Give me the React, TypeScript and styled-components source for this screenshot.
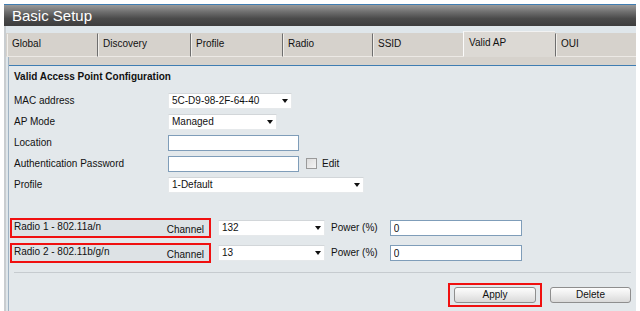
import React from "react";
import styled, { createGlobalStyle } from "styled-components";

const GlobalStyle = createGlobalStyle`
  html, body { margin: 0; padding: 0; background: #fff; overflow: hidden; }
  body {
    font-family: "Liberation Sans", Arial, sans-serif;
    font-size: 10px;
    color: #111;
  }
  * { box-sizing: border-box; }
`;

const Page = styled.div`
  margin-left: 4px;
  width: 632px;
  padding-top: 4px;
`;

const TitleBar = styled.div`
  border-top: 1px solid #3f7db2;
  height: 22px;
  padding-left: 8px;
  background: linear-gradient(to bottom, #9a9a9a 0%, #6c6c6c 35%, #4a4a4a 65%, #3d3d3d 100%);
  color: #fff;
  font-size: 15px;
  line-height: 21px;
`;

const Frame = styled.div`
  background: #dfe6ea;
  border-left: 2px solid #c9cdd0;
  height: 290px;
`;

const TabStrip = styled.div`
  display: flex;
  align-items: flex-end;
  height: 31px;
  padding-top: 5px;
`;

const Tab = styled.div<{ $active?: boolean; $first?: boolean; $w?: number }>`
  flex: ${(p) => (p.$w ? `0 0 ${p.$w}px` : "1 1 auto")};
  height: ${(p) => (p.$active ? 26 : 24)}px;
  display: flex;
  align-items: center;
  padding: 0 0 ${(p) => (p.$active ? 4 : 3)}px 5px;
  background: ${(p) => (p.$active ? "#dcd9d4" : "#d6d2cc")};
  border-left: 1px solid ${(p) => (p.$active ? "#fbfbfb" : p.$first ? "#d6d2cc" : "#6e6e6e")};
  border-top: 1px solid ${(p) => (p.$active ? "#f2f2f2" : "#d6d2cc")};
  border-bottom: 1px solid ${(p) => (p.$active ? "#dcd9d4" : "#ece9e5")};
  box-shadow: ${(p) => (p.$active ? "none" : "inset 1px 0 #f1efeb")};
  color: #111;
  white-space: nowrap;
  overflow: hidden;
`;

const Panel = styled.div`
  margin-left: 2px;
  background: #e3e8eb;
  border-left: 1px solid #9fb3c4;
  height: 260px;
`;

const PanelCap = styled.div`
  height: 9px;
  background: #d6d2cc;
  border-bottom: 1px solid #3f7db2;
`;

const PanelBody = styled.div`
  padding: 0 5px 0 1px;
`;

const Heading = styled.div`
  margin-top: 5px;
  padding-left: 4px;
  font-weight: bold;
  line-height: 12px;
`;

const FormGrid = styled.div`
  margin-top: 7px;
  padding-left: 4px;
  display: grid;
  grid-template-columns: 154px auto;
  grid-auto-rows: 21px;
  align-items: center;
`;

const Label = styled.div`
  line-height: 12px;
`;

const Inline = styled.div`
  display: flex;
  align-items: center;
`;

const SelectWrap = styled.div<{ $w: number }>`
  position: relative;
  width: ${(p) => p.$w}px;
  height: 16px;
  background: #fff;
  border: 1px solid #e6e9eb;
  border-top-color: #d2d6d9;
  &::after {
    content: "";
    position: absolute;
    right: 3px;
    top: 5px;
    border-left: 3.5px solid transparent;
    border-right: 3.5px solid transparent;
    border-top: 4px solid #111;
    pointer-events: none;
  }
`;

const NativeSelect = styled.select`
  appearance: none;
  -webkit-appearance: none;
  border: none;
  outline: none;
  background: transparent;
  width: 100%;
  height: 14px;
  padding: 0 0 0 3px;
  margin: 0;
  font-family: "Liberation Sans", Arial, sans-serif;
  font-size: 10px;
  line-height: 14px;
  color: #111;
`;

const TextBox = styled.input<{ $w: number }>`
  width: ${(p) => p.$w}px;
  height: 16px;
  margin: 0;
  padding: 0 3px;
  border: 1px solid #7f9db9;
  background: #fff;
  font-family: "Liberation Sans", Arial, sans-serif;
  font-size: 10px;
  color: #111;
  outline: none;
`;

const CheckBox = styled.span`
  display: inline-block;
  width: 11px;
  height: 11px;
  margin-left: 7px;
  border: 1px solid #9a9a9a;
  background: linear-gradient(135deg, #dcdcdc, #f4f4f4);
`;

const SmallText = styled.span`
  margin-left: 5px;
  font-size: 10px;
`;

const RadioList = styled.div`
  margin-top: 23px;
  display: flex;
  flex-direction: column;
  gap: 5px;
`;

const RadioRow = styled.div`
  display: flex;
  align-items: center;
  height: 20px;
`;

const RadioBox = styled.div`
  width: 201px;
  height: 20px;
  display: flex;
  justify-content: space-between;
  align-items: center;
  padding: 0 5px 0 2px;
  border: 2px solid #f01010;
  background: #dde2e5;
  margin-right: 7px;
`;

const RadioName = styled.span`
  line-height: 12px;
  padding-bottom: 2px;
`;

const ChannelLabel = styled.span`
  line-height: 12px;
  padding-top: 3px;
`;

const PowerLabel = styled.span`
  margin: 0 12px 0 6px;
  line-height: 12px;
`;

const Separator = styled.div`
  margin: 9px 0 0 4px;
  height: 1px;
  background: #c6cbcf;
`;

const ButtonRow = styled.div`
  margin-top: 10px;
  display: flex;
  justify-content: flex-end;
  align-items: center;
  gap: 8px;
`;

const Highlight = styled.div`
  border: 2px solid #f01010;
  padding: 2px 4px;
`;

const Button = styled.button<{ $w: number }>`
  width: ${(p) => p.$w}px;
  height: 16px;
  margin: 0;
  padding: 0;
  border: 1px solid #8e8e8e;
  border-radius: 3px;
  background: linear-gradient(to bottom, #fdfdfd 0%, #ececec 50%, #d9d9d9 100%);
  font-family: "Liberation Sans", Arial, sans-serif;
  font-size: 10px;
  color: #111;
  line-height: 14px;
`;

const tabs = [
  { name: "Global", w: 91 },
  { name: "Discovery", w: 93 },
  { name: "Profile", w: 92 },
  { name: "Radio", w: 90 },
  { name: "SSID", w: 91 },
  { name: "Valid AP", w: 92 },
  { name: "OUI", w: 0 },
];

const Select = ({ w, value }: { w: number; value: string }) => (
  <SelectWrap $w={w}>
    <NativeSelect defaultValue={value}>
      <option value={value}>{value}</option>
    </NativeSelect>
  </SelectWrap>
);

const radios = [
  { name: "Radio 1 - 802.11a/n", channel: "132", power: "0" },
  { name: "Radio 2 - 802.11b/g/n", channel: "13", power: "0" },
];

export default function App() {
  return (
    <>
      <GlobalStyle />
      <Page>
        <TitleBar>Basic Setup</TitleBar>
        <Frame>
          <TabStrip>
            {tabs.map((t, i) => (
              <Tab key={t.name} $w={t.w || undefined} $first={i === 0} $active={t.name === "Valid AP"}>
                {t.name}
              </Tab>
            ))}
          </TabStrip>
          <Panel>
            <PanelCap />
            <PanelBody>
              <Heading>Valid Access Point Configuration</Heading>
              <FormGrid>
                <Label>MAC address</Label>
                <Select w={124} value="5C-D9-98-2F-64-40" />
                <Label>AP Mode</Label>
                <Select w={109} value="Managed" />
                <Label>Location</Label>
                <TextBox $w={131} defaultValue="" />
                <Label>Authentication Password</Label>
                <Inline>
                  <TextBox $w={131} type="password" defaultValue="" />
                  <CheckBox />
                  <SmallText>Edit</SmallText>
                </Inline>
                <Label>Profile</Label>
                <Select w={196} value="1-Default" />
              </FormGrid>
              <RadioList>
                {radios.map((r) => (
                  <RadioRow key={r.name}>
                    <RadioBox>
                      <RadioName>{r.name}</RadioName>
                      <ChannelLabel>Channel</ChannelLabel>
                    </RadioBox>
                    <Select w={107} value={r.channel} />
                    <PowerLabel>Power (%)</PowerLabel>
                    <TextBox $w={132} defaultValue={r.power} />
                  </RadioRow>
                ))}
              </RadioList>
              <Separator />
              <ButtonRow>
                <Highlight>
                  <Button $w={82}>Apply</Button>
                </Highlight>
                <Button $w={81}>Delete</Button>
              </ButtonRow>
            </PanelBody>
          </Panel>
        </Frame>
      </Page>
    </>
  );
}
